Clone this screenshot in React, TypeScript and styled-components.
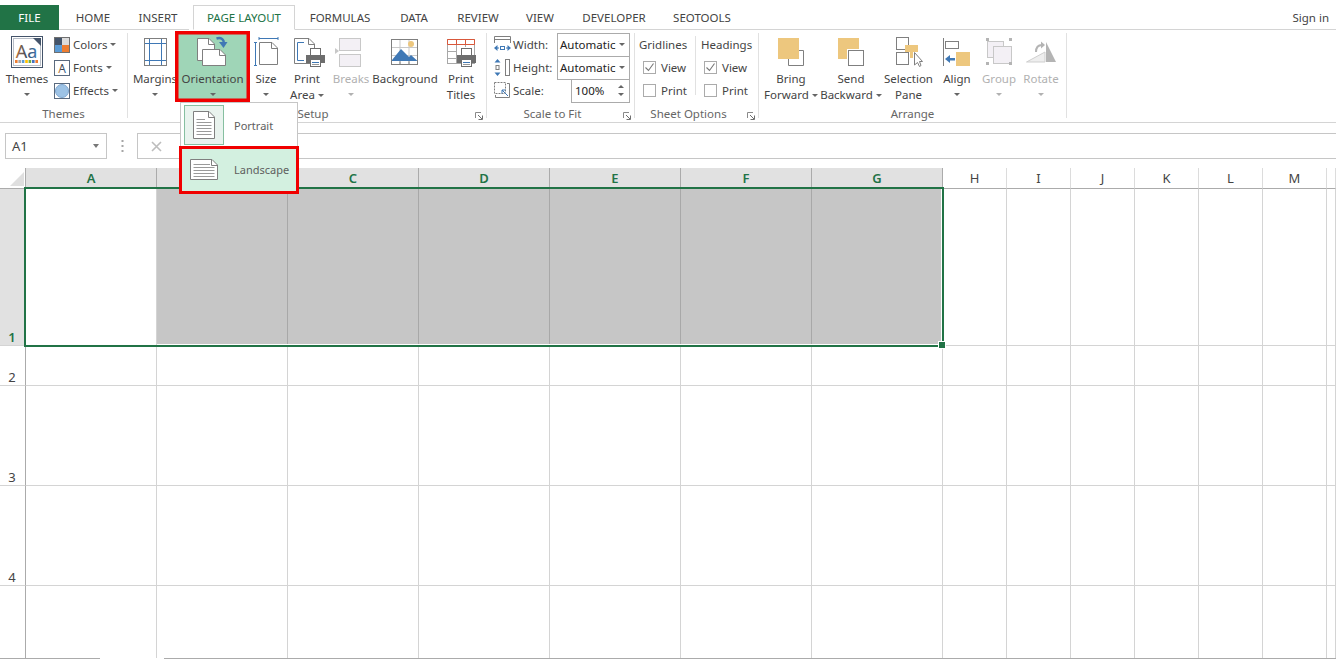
import React from "react";
import styled, { createGlobalStyle } from "styled-components";

const FONT = `"Noto Sans", "Open Sans", "Liberation Sans", sans-serif`;
const GREEN = "#217346";
const GRAY = "#7f7f7f";
const BLUE = "#3f78b5";
const ORANGE = "#edc77e";

const Global = createGlobalStyle`
  html, body { margin: 0; padding: 0; height: 660px; overflow: hidden; background: #fff; }
  body { font-family: ${FONT}; font-size: 11.5px; color: #444; }
  * { box-sizing: border-box; }
`;

const Page = styled.div`
  width: 1336px;
  height: 660px;
  overflow: hidden;
  display: flex;
  flex-direction: column;
`;

/* ---------- tab strip ---------- */
const TabBar = styled.nav`
  height: 30px;
  display: flex;
  align-items: flex-end;
  position: relative;
  flex: none;
  z-index: 1;
`;
const Tab = styled.div<{ $w: number; $file?: boolean; $active?: boolean }>`
  width: ${(p) => p.$w}px;
  height: 25px;
  display: flex;
  align-items: center;
  justify-content: center;
  font-size: 11.5px;
  color: ${(p) => (p.$file ? "#fff" : p.$active ? GREEN : "#444")};
  background: ${(p) => (p.$file ? GREEN : "#fff")};
  border: ${(p) => (p.$active ? "1px solid #d4d4d4" : "none")};
  border-bottom: ${(p) => (p.$active ? "1px solid #fff" : p.$file ? "none" : "1px solid #d4d4d4")};
  margin-left: ${(p) => (p.$active ? 4 : 0)}px;
`;
const TabFill = styled.div`
  flex: 1;
  height: 25px;
  display: flex;
  align-items: center;
  justify-content: flex-end;
  padding-right: 7px;
  border-bottom: 1px solid #d4d4d4;
  font-size: 11.5px;
`;

/* ---------- ribbon ---------- */
const Ribbon = styled.div`
  height: 93px;
  flex: none;
  display: flex;
  padding-top: 3px;
  border-bottom: 1px solid #d4d4d4;
  position: relative;
  z-index: 5;
`;
const Group = styled.section<{ $w: number }>`
  width: ${(p) => p.$w}px;
  height: 85px;
  border-right: 1px solid #e1e1e1;
  position: relative;
  flex: none;
`;
const GroupBody = styled.div<{ $pad?: number }>`
  height: 71px;
  margin-top: -2px;
  display: flex;
  padding-left: ${(p) => p.$pad ?? 0}px;
`;
const GroupLabel = styled.div<{ $shift?: number }>`
  margin-top: 5px;
  height: 14px;
  line-height: 14px;
  text-align: center;
  font-size: 11.5px;
  color: #666;
  padding-right: ${(p) => p.$shift ?? 0}px;
  white-space: nowrap;
`;
const Launcher = styled.svg`
  position: absolute;
  right: 3px;
  top: 79px;
`;
const LargeButton = styled.div<{ $w: number; $off?: boolean; $on?: boolean; $lap?: number }>`
  width: ${(p) => p.$w}px;
  margin-left: ${(p) => p.$lap ?? 0}px;
  height: 71px;
  flex: none;
  display: flex;
  flex-direction: column;
  align-items: center;
  position: relative;
  color: ${(p) => (p.$off ? "#b1b1b1" : "#444")};
  background: ${(p) => (p.$on ? "#9fd5b7" : "transparent")};
  box-shadow: ${(p) => (p.$on ? "inset 0 0 0 3.5px #f00000" : "none")};
`;
const Art = styled.svg`
  display: block;
  flex: none;
`;
const Line = styled.div`
  height: 16px;
  line-height: 16px;
  font-size: 11.5px;
  white-space: nowrap;
  display: flex;
  align-items: center;
  justify-content: center;
`;
const Caret = styled.span<{ $off?: boolean; $gap?: number }>`
  display: inline-block;
  width: 0;
  height: 0;
  margin-left: ${(p) => p.$gap ?? 0}px;
  border-left: 3px solid transparent;
  border-right: 3px solid transparent;
  border-top: 3px solid ${(p) => (p.$off ? "#b1b1b1" : "#666")};
`;

const StackColumn = styled.div<{ $w?: number; $pad?: number }>`
  width: ${(p) => (p.$w ? `${p.$w}px` : "auto")};
  padding-top: 2px;
  padding-left: ${(p) => p.$pad ?? 0}px;
  display: flex;
  flex-direction: column;
  flex: none;
`;
const StackRow = styled.div<{ $gap?: number; $in?: number }>`
  height: 23px;
  display: flex;
  align-items: center;
  gap: ${(p) => p.$gap ?? 3}px;
  padding-left: ${(p) => p.$in ?? 0}px;
  font-size: 11.5px;
  white-space: nowrap;
`;
const DropBox = styled.div<{ $w: number; $inset?: number }>`
  width: ${(p) => p.$w}px;
  height: 24px;
  align-self: flex-start;
  margin-left: auto;
  border: 1px solid #ababab;
  background: #fff;
  display: flex;
  align-items: center;
  padding: 0 4px 1px ${(p) => p.$inset ?? 2}px;
  color: #222;
  font-size: 11.5px;
  justify-content: space-between;
`;
const Spin = styled.div`
  display: flex;
  flex-direction: column;
  gap: 5px;
  padding-right: 1px;
`;
const SpinUp = styled(Caret)`
  border-top: none;
  border-bottom: 3px solid #666;
`;
const Check = styled.span`
  width: 13px;
  height: 13px;
  border: 1px solid #ababab;
  background: #fff;
  display: inline-flex;
  align-items: center;
  justify-content: center;
  flex: none;
`;
const Divider = styled.div`
  width: 1px;
  height: 59px;
  margin-top: 5px;
  background: #e1e1e1;
  flex: none;
`;

/* ---------- orientation menu ---------- */
const Menu = styled.div`
  position: absolute;
  left: 5px;
  top: 71px;
  width: 118px;
  height: 91px;
  background: #fff;
  border: 1px solid #c6c6c6;
  color: #5e5e5e;
  z-index: 3;
`;
const MenuRow = styled.div<{ $hot?: boolean }>`
  display: flex;
  align-items: center;
  font-size: 11px;
  height: ${(p) => (p.$hot ? 48 : 44)}px;
  width: ${(p) => (p.$hot ? 120 : 116)}px;
  margin-left: ${(p) => (p.$hot ? -2 : 0)}px;
  margin-top: ${(p) => (p.$hot ? -1 : 0)}px;
  padding-left: ${(p) => (p.$hot ? 8 : 3)}px;
  padding-bottom: ${(p) => (p.$hot ? 2 : 0)}px;
  background: ${(p) => (p.$hot ? "#d3f0e0" : "#fff")};
  border: ${(p) => (p.$hot ? "3px solid #f00000" : "none")};
  gap: ${(p) => (p.$hot ? 16 : 10)}px;
`;
const MenuIcon = styled.span<{ $boxed?: boolean }>`
  display: flex;
  align-items: center;
  justify-content: center;
  width: ${(p) => (p.$boxed ? 40 : 28)}px;
  height: ${(p) => (p.$boxed ? 40 : 24)}px;
  background: ${(p) => (p.$boxed ? "#e9f3ee" : "transparent")};
  border: ${(p) => (p.$boxed ? "1px solid #86bfa0" : "none")};
  flex: none;
`;

/* ---------- formula bar ---------- */
const FormulaBar = styled.div`
  height: 45px;
  flex: none;
  padding: 10px 0 9px 5px;
  display: flex;
`;
const NameBox = styled.div`
  width: 102px;
  height: 26px;
  border: 1px solid #c6c6c6;
  display: flex;
  align-items: center;
  justify-content: space-between;
  padding: 0 7px 0 6px;
  font-size: 13px;
  color: #444;
`;
const NameCaret = styled.span`
  width: 0;
  height: 0;
  border-left: 3.5px solid transparent;
  border-right: 3.5px solid transparent;
  border-top: 4px solid #777;
`;
const DotsSlot = styled.div`
  width: 30px;
  display: flex;
  align-items: center;
  justify-content: center;
`;
const FormulaBox = styled.div`
  flex: 1;
  height: 26px;
  border: 1px solid #c6c6c6;
  border-right: none;
  display: flex;
  align-items: center;
  padding-left: 13px;
`;

/* ---------- sheet ---------- */
const Sheet = styled.div`
  position: relative;
  display: grid;
  grid-template-columns: 26px repeat(7, 131px) repeat(6, 64px) 1fr;
  grid-template-rows: 21px 157px 40px 100px 100px 72px;
  flex: none;
`;
const Corner = styled.div`
  border-right: 1px solid #ababab;
  border-bottom: 1px solid #ababab;
  padding: 4px 1px 2px 10px;
`;
const CornerMark = styled.div`
  width: 14px;
  height: 14px;
  background: #dfdfdf;
  clip-path: polygon(100% 0, 100% 100%, 0 100%);
`;
const ColHead = styled.div<{ $sel?: boolean }>`
  display: flex;
  align-items: center;
  justify-content: center;
  font-size: 13px;
  font-weight: ${(p) => (p.$sel ? 600 : 400)};
  color: ${(p) => (p.$sel ? GREEN : "#444")};
  background: ${(p) => (p.$sel ? "#e1e1e1" : "#fff")};
  border-right: 1px solid ${(p) => (p.$sel ? "#ababab" : "#dcdcdc")};
  border-bottom: 1px solid #ababab;
`;
const RowHead = styled.div<{ $sel?: boolean; $last?: boolean }>`
  display: flex;
  align-items: flex-end;
  justify-content: center;
  padding: 0 1px 0 0;
  line-height: 16px;
  font-size: 13px;
  font-weight: ${(p) => (p.$sel ? 600 : 400)};
  color: ${(p) => (p.$sel ? GREEN : "#444")};
  background: ${(p) => (p.$sel ? "#e1e1e1" : "#fff")};
  border-right: 1px solid #ababab;
  border-bottom: ${(p) => (p.$last ? "none" : "1px solid #d4d4d4")};
`;
const Cell = styled.div<{ $sel?: boolean; $last?: boolean }>`
  background: ${(p) => (p.$sel ? "#c6c6c6" : "#fff")};
  border-right: 1px solid ${(p) => (p.$sel ? "#a8a8a8" : "#d4d4d4")};
  border-bottom: ${(p) => (p.$last ? "none" : "1px solid #d4d4d4")};
`;
const Selection = styled.div`
  position: absolute;
  left: 24px;
  top: 19px;
  width: 920px;
  height: 160px;
  border: 2px solid ${GREEN};
  &::before {
    content: "";
    position: absolute;
    left: 131px;
    right: 0;
    top: 0;
    bottom: 0;
    border-right: 1px solid #fff;
    border-bottom: 1px solid #fff;
  }
`;
const Handle = styled.div`
  position: absolute;
  right: -3px;
  bottom: -3px;
  width: 6px;
  height: 6px;
  background: ${GREEN};
  outline: 1px solid #fff;
`;
const SheetFoot = styled.div`
  height: 2px;
  flex: none;
  display: flex;
  gap: 64px;
`;
const FootLine = styled.div<{ $w?: number }>`
  ${(p) => (p.$w ? `width:${p.$w}px;` : "flex:1;")}
  height: 1px;
  background: #ababab;
`;

/* ---------- drawings ---------- */
type ArtProps = { x: number; w: number; children: React.ReactNode };
const PageArt = ({ x, w, children }: ArtProps) => (
  <Art width={w} height={40} viewBox={`${x} 31 ${w} 40`}>
    {children}
  </Art>
);

const Sheetlet = ({ x, y, w, h, f = 7, s = GRAY, fill = "#fff" }: { x: number; y: number; w: number; h: number; f?: number; s?: string; fill?: string }) => (
  <>
    <path d={`M${x + 0.5} ${y + 0.5}H${x + w - f}L${x + w - 0.5} ${y + f}V${y + h - 0.5}H${x + 0.5}Z`} fill={fill} stroke={s} />
    <path d={`M${x + w - f - 0.5} ${y + 0.5}V${y + f + 0.5}H${x + w - 0.5}`} fill="none" stroke={s} />
  </>
);

const Printer = ({ x, y }: { x: number; y: number }) => (
  <>
    <rect x={x + 4.5} y={y + 0.5} width={10} height={8} fill="#fff" stroke="#6d6d6d" />
    <path d={`M${x} ${y + 7}H${x + 19}V${y + 15}H${x}Z`} fill="#6d6d6d" />
    <rect x={x + 4.5} y={y + 11.5} width={10} height={7} fill="#fff" stroke="#6d6d6d" />
    <path d={`M${x + 6} ${y + 14.5}H${x + 13}`} stroke={BLUE} />
    <path d={`M${x + 6} ${y + 16.5}H${x + 13}`} stroke="#9a9a9a" />
  </>
);

const ThemesArt = () => (
  <PageArt x={3} w={48}>
    <defs>
      <linearGradient id="aa" x1="0" x2="1" y1="0" y2="0">
        <stop offset="0" stopColor="#b9703a" />
        <stop offset="0.5" stopColor="#3a4a63" />
        <stop offset="1" stopColor="#3f78b5" />
      </linearGradient>
    </defs>
    <rect x={11.5} y={36.5} width={31} height={31} fill="#fff" stroke="#44546a" />
    <rect x={13.5} y={38.5} width={27} height={27} fill="#fff" stroke="#b8bec7" />
    <path d="M33 38H41V46Z" fill="#44546a" />
    <text x={26.5} y={57.5} textAnchor="middle" fontFamily={FONT} fontSize={18} fill="url(#aa)">Aa</text>
    {["#ed7d31", "#a5a5a5", "#5b9bd5", "#ffc000", "#70ad47", "#4472c4", "#ed7d31"].map((c, i) => (
      <rect key={i} x={15 + i * 3.4} y={60} width={2.6} height={3} fill={c} />
    ))}
  </PageArt>
);
const SmallFrame = styled.svg`
  flex: none;
  display: block;
`;
const ColorsArt = () => (
  <SmallFrame width={16} height={16} viewBox="0 0 16 16">
    <rect width={8} height={8} fill="#44546a" />
    <rect x={8} width={8} height={8} fill="#dcdcdc" />
    <rect y={8} width={8} height={8} fill="#5b9bd5" />
    <rect x={8} y={8} width={8} height={8} fill="#ed7d31" />
    <rect x={0.5} y={0.5} width={15} height={15} fill="none" stroke="#6f6f6f" />
  </SmallFrame>
);
const FontsArt = () => (
  <SmallFrame width={16} height={16} viewBox="0 0 16 16">
    <defs>
      <linearGradient id="fa" x1="0" x2="1" y1="0" y2="0">
        <stop offset="0" stopColor="#e08a3c" />
        <stop offset="0.5" stopColor="#30384a" />
        <stop offset="1" stopColor="#3f78b5" />
      </linearGradient>
    </defs>
    <rect x={0.5} y={0.5} width={15} height={15} fill="#fff" stroke="#5a6a7f" />
    <text x={8} y={12.5} textAnchor="middle" fontFamily={FONT} fontSize={12} fill="url(#fa)">A</text>
  </SmallFrame>
);
const EffectsArt = () => (
  <SmallFrame width={16} height={16} viewBox="0 0 16 16">
    <rect x={0.5} y={0.5} width={15} height={15} fill="#fff" stroke="#5a6a7f" />
    <circle cx={8} cy={8} r={6.5} fill="#9dc3e6" stroke="#7ea6cf" />
  </SmallFrame>
);
const MarginsArt = () => (
  <PageArt x={131} w={48}>
    <rect x={144.5} y={38.5} width={22} height={27} fill="#fff" stroke={GRAY} />
    <path d="M149.5 39V65M161.5 39V65M145 43.5H166M145 60.5H166" stroke={BLUE} fill="none" />
  </PageArt>
);
const OrientationArt = () => (
  <PageArt x={175} w={75}>
    <Sheetlet x={197} y={38} w={18} h={23} f={6} />
    <Sheetlet x={202} y={49} w={24} h={17} f={6} />
    <path d="M216.5 38.5C221 37 224.5 39.5 223.5 43.5" fill="none" stroke={BLUE} strokeWidth={2.4} />
    <path d="M219 42L223.5 48L227.5 42Z" fill={BLUE} />
  </PageArt>
);
const SizeArt = () => (
  <PageArt x={250} w={32}>
    <path d="M259 38.5H278M255.5 42V65" stroke={BLUE} fill="none" />
    <path d="M259 37V40M278 37V40M254 42.5H257M254 65.5H257" stroke={BLUE} fill="none" />
    <Sheetlet x={259} y={42} w={19} h={23} f={6} />
  </PageArt>
);
const PrintAreaArt = () => (
  <PageArt x={284} w={46}>
    <Sheetlet x={294} y={38} w={21} h={26} f={6} />
    <path d="M304 42.5H297.5V60.5H304" fill="none" stroke={BLUE} />
    <Printer x={306} y={48} />
  </PageArt>
);
const BreaksArt = () => (
  <PageArt x={331} w={40}>
    <rect x={339.5} y={38.5} width={21} height={12} fill="#f3f0f5" stroke="#c8c8c8" />
    <rect x={339.5} y={54.5} width={21} height={12} fill="#f3f0f5" stroke="#c8c8c8" />
    <path d="M335 48V54L339 51Z" fill="#c8c8c8" />
  </PageArt>
);
const BackgroundArt = () => (
  <PageArt x={371} w={68}>
    <rect x={391.5} y={39.5} width={26} height={25} fill="#fff" stroke={GRAY} />
    <path d="M400 40V64M409 40V64M392 47.5H417M392 55.5H417" stroke="#c9c9c9" fill="none" />
    <circle cx={411} cy={44} r={3} fill={ORANGE} />
    <path d="M392 60L401 49L409 57L411 55L417 60.5V61H392Z" fill={BLUE} />
    <path d="M392 61.5H417" stroke="#fff" />
    <path d="M400 61V64M409 61V64" stroke={GRAY} />
  </PageArt>
);
const PrintTitlesArt = () => (
  <PageArt x={441} w={40}>
    <rect x={447.5} y={39.5} width={27} height={24} fill="#fff" stroke="#a8a8a8" />
    <path d="M448 44.5H474M448 51.5H456M448 58.5H456M456.5 40V64M465.5 40V47" stroke="#a8a8a8" fill="none" />
    <path d="M447.5 39.5H474.5V44.5H447.5ZM456.5 40V44M465.5 40V44" stroke="#d9583b" fill="none" />
    <Printer x={457} y={48} />
  </PageArt>
);
const WidthArt = () => (
  <SmallFrame width={17} height={17} viewBox="0 0 17 17">
    <path d="M0.5 7V0.5H16.5V7M0.5 3.5H16.5" fill="none" stroke={GRAY} />
    <path d="M0 12L3.5 9V15ZM17 12L13.5 9V15Z" fill={BLUE} />
    <path d="M3 12H5M12 12H14" stroke={BLUE} />
    <rect x={6.5} y={10.5} width={4} height={3} fill="none" stroke={BLUE} />
  </SmallFrame>
);
const HeightArt = () => (
  <SmallFrame width={17} height={17} viewBox="0 0 17 17">
    <path d="M3.5 0L6.5 3.5H0.5ZM3.5 17L6.5 13.5H0.5Z" fill={BLUE} />
    <rect x={2} y={6.5} width={3} height={4} fill="none" stroke={GRAY} />
    <rect x={11.5} y={0.5} width={4} height={16} fill="none" stroke={GRAY} />
  </SmallFrame>
);
const ScaleArt = () => (
  <SmallFrame width={17} height={17} viewBox="0 0 17 17">
    <path d="M13 1.5H15.5V15.5H1.5V13" fill="none" stroke={GRAY} />
    <rect x={0.5} y={0.5} width={11} height={11} fill="#fff" stroke={GRAY} strokeDasharray="2 1" />
    <path d="M8 8L14 14M8 8H11.5M8 8V11.5" fill="none" stroke={BLUE} />
  </SmallFrame>
);
const Tick = () => (
  <svg width={11} height={11} viewBox="0 0 11 11">
    <path d="M1.5 5.5L4.5 8.5L9.5 1.5" fill="none" stroke="#777" strokeWidth={1.1} />
  </svg>
);
const BringArt = () => (
  <PageArt x={761} w={60}>
    <path d="M799 50.5H803.5V65.5H788.5V59" fill="none" stroke={GRAY} strokeWidth={1} />
    <rect x={778} y={38} width={21} height={21} fill={ORANGE} />
  </PageArt>
);
const SendArt = () => (
  <PageArt x={821} w={60}>
    <rect x={838} y={38} width={21} height={21} fill={ORANGE} />
    <rect x={847} y={49} width={18} height={17.5} fill="#fff" />
    <rect x={848.5} y={50.5} width={15} height={15} fill="#fff" stroke={GRAY} />
  </PageArt>
);
const SelectionArt = () => (
  <PageArt x={881} w={55}>
    <rect x={896.5} y={37.5} width={12} height={12} fill="#fff" stroke={GRAY} />
    <rect x={896.5} y={52.5} width={12} height={12} fill="#fff" stroke={GRAY} />
    <path d="M905 45H918V52H913V58H910V52H905Z" fill={ORANGE} />
    <path d="M914.5 52.5V65L917.5 62.5L919.5 66.5L921 65.5L919.5 61.5H922.5Z" fill="#fff" stroke={GRAY} />
  </PageArt>
);
const AlignArt = () => (
  <PageArt x={936} w={42}>
    <path d="M943.5 38V66" stroke={GRAY} />
    <rect x={945.5} y={41.5} width={13} height={7} fill="#fff" stroke={GRAY} />
    <rect x={956} y={52} width={14} height={14} fill={ORANGE} />
    <path d="M945 59L950 55V58H955V60.5H950V63Z" fill={BLUE} />
  </PageArt>
);
const GroupArt = () => (
  <PageArt x={978} w={42}>
    <rect x={987.5} y={41.5} width={16} height={16} fill="#f3f0f5" stroke="#c8c8c8" />
    <rect x={993.5} y={46.5} width={18} height={17} fill="#f3f0f5" stroke="#c8c8c8" />
    {[[986, 38], [1009, 38], [986, 62], [1009, 62]].map(([x, y]) => (
      <rect key={x * y} x={x} y={y} width={3} height={3} fill="#b4b4b4" />
    ))}
  </PageArt>
);
const RotateArt = () => (
  <PageArt x={1020} w={42}>
    <path d="M1026.5 62H1045V52Z" fill="#eeeeee" stroke="#cfcfcf" />
    <path d="M1046 42L1056 62H1046Z" fill="#b4b4b4" />
    <path d="M1036 52C1036 47 1038 45 1042 45" fill="none" stroke="#b4b4b4" strokeWidth={2} />
    <path d="M1041 41.5L1045 45L1041 48.5Z" fill="#b4b4b4" />
  </PageArt>
);
const LauncherArt = () => (
  <Launcher width={8} height={8} viewBox="0 0 8 8">
    <path d="M0.5 6V0.5H6" fill="none" stroke="#8a8a8a" />
    <path d="M3 3L7 7M7.5 3.5V7.5H3.5" fill="none" stroke="#6f6f6f" />
  </Launcher>
);
const PortraitArt = () => (
  <svg width={23} height={29} viewBox="0 0 23 29">
    <Sheetlet x={0} y={0} w={22} h={28} f={6} />
    <path d="M3.5 8.5H12M3.5 11.5H18.5M3.5 14.5H18.5M3.5 17.5H18.5M3.5 20.5H18.5M3.5 23.5H18.5" stroke="#9a9a9a" />
  </svg>
);
const LandscapeArt = () => (
  <svg width={28} height={21} viewBox="0 0 28 21">
    <Sheetlet x={0} y={0} w={28} h={21} f={6} />
    <path d="M3.5 5.5H20M3.5 8.5H24.5M3.5 11.5H24.5M3.5 14.5H24.5M3.5 17.5H24.5" stroke="#9a9a9a" />
  </svg>
);
const Dots = () => (
  <svg width={3} height={12} viewBox="0 0 3 12">
    <path d="M0.5 0H2.5V2H0.5ZM0.5 5H2.5V7H0.5ZM0.5 10H2.5V12H0.5Z" fill="#a6a6a6" />
  </svg>
);
const CrossArt = () => (
  <svg width={11} height={11} viewBox="0 0 11 11">
    <path d="M1 1L10 10M10 1L1 10" stroke="#bdbdbd" strokeWidth={1.6} />
  </svg>
);

/* ---------- data ---------- */
const TABS: [string, number][] = [
  ["HOME", 68],
  ["INSERT", 62],
];
const TABS_AFTER: [string, number][] = [
  ["FORMULAS", 90],
  ["DATA", 58],
  ["REVIEW", 70],
  ["VIEW", 54],
  ["DEVELOPER", 94],
  ["SEOTOOLS", 82],
];
const COLS = ["A", "B", "C", "D", "E", "F", "G", "H", "I", "J", "K", "L", "M", ""];
const ROWS = [
  { n: "1", sel: true },
  { n: "2" },
  { n: "3" },
  { n: "4" },
  { n: "", last: true },
];

export default function App() {
  return (
    <Page>
      <Global />
      <TabBar>
        <Tab $w={59} $file>FILE</Tab>
        {TABS.map(([t, w]) => (
          <Tab key={t} $w={w}>{t}</Tab>
        ))}
        <Tab $w={102} $active>PAGE LAYOUT</Tab>
        {TABS_AFTER.map(([t, w]) => (
          <Tab key={t} $w={w}>{t}</Tab>
        ))}
        <TabFill>Sign in</TabFill>
      </TabBar>

      <Ribbon>
        <Group $w={128}>
          <GroupBody $pad={3}>
            <LargeButton $w={48}>
              <ThemesArt />
              <Line>Themes</Line>
              <Line><Caret /></Line>
            </LargeButton>
            <StackColumn $pad={3}>
              <StackRow><ColorsArt />Colors<Caret /></StackRow>
              <StackRow><FontsArt />Fonts<Caret /></StackRow>
              <StackRow><EffectsArt />Effects<Caret /></StackRow>
            </StackColumn>
          </GroupBody>
          <GroupLabel>Themes</GroupLabel>
        </Group>

        <Group $w={359}>
          <GroupBody $pad={3}>
            <LargeButton $w={48}>
              <MarginsArt />
              <Line>Margins</Line>
              <Line><Caret /></Line>
            </LargeButton>
            <LargeButton $w={75} $lap={-4} $on>
              <OrientationArt />
              <Line>Orientation</Line>
              <Line><Caret /></Line>
              <Menu>
                <MenuRow>
                  <MenuIcon $boxed><PortraitArt /></MenuIcon>
                  Portrait
                </MenuRow>
                <MenuRow $hot>
                  <MenuIcon><LandscapeArt /></MenuIcon>
                  Landscape
                </MenuRow>
              </Menu>
            </LargeButton>
            <LargeButton $w={32}>
              <SizeArt />
              <Line>Size</Line>
              <Line><Caret /></Line>
            </LargeButton>
            <LargeButton $w={46} $lap={2}>
              <PrintAreaArt />
              <Line>Print</Line>
              <Line>Area<Caret $gap={3} /></Line>
            </LargeButton>
            <LargeButton $w={40} $lap={1} $off>
              <BreaksArt />
              <Line>Breaks</Line>
              <Line><Caret $off /></Line>
            </LargeButton>
            <LargeButton $w={68}>
              <BackgroundArt />
              <Line>Background</Line>
            </LargeButton>
            <LargeButton $w={40} $lap={2}>
              <PrintTitlesArt />
              <Line>Print</Line>
              <Line>Titles</Line>
            </LargeButton>
          </GroupBody>
          <GroupLabel $shift={18}>Page Setup</GroupLabel>
          <LauncherArt />
        </Group>

        <Group $w={148}>
          <GroupBody $pad={7}>
            <StackColumn $w={136}>
              <StackRow $gap={2}><WidthArt />Width:<DropBox $w={73}>Automatic<Caret /></DropBox></StackRow>
              <StackRow $gap={2}><HeightArt />Height:<DropBox $w={73}>Automatic<Caret /></DropBox></StackRow>
              <StackRow $gap={2}>
                <ScaleArt />Scale:
                <DropBox $w={59} $inset={3}>
                  <span>100%</span>
                  <Spin><SpinUp /><Caret /></Spin>
                </DropBox>
              </StackRow>
            </StackColumn>
          </GroupBody>
          <GroupLabel $shift={16}>Scale to Fit</GroupLabel>
          <LauncherArt />
        </Group>

        <Group $w={124}>
          <GroupBody $pad={4}>
            <StackColumn $w={56}>
              <StackRow>Gridlines</StackRow>
              <StackRow $gap={5} $in={4}><Check><Tick /></Check>View</StackRow>
              <StackRow $gap={5} $in={4}><Check />Print</StackRow>
            </StackColumn>
            <Divider />
            <StackColumn $pad={5}>
              <StackRow>Headings</StackRow>
              <StackRow $gap={5} $in={3}><Check><Tick /></Check>View</StackRow>
              <StackRow $gap={5} $in={3}><Check />Print</StackRow>
            </StackColumn>
          </GroupBody>
          <GroupLabel $shift={16}>Sheet Options</GroupLabel>
          <LauncherArt />
        </Group>

        <Group $w={308}>
          <GroupBody $pad={2}>
            <LargeButton $w={60}>
              <BringArt />
              <Line>Bring</Line>
              <Line>Forward<Caret $gap={3} /></Line>
            </LargeButton>
            <LargeButton $w={60}>
              <SendArt />
              <Line>Send</Line>
              <Line>Backward<Caret $gap={3} /></Line>
            </LargeButton>
            <LargeButton $w={55}>
              <SelectionArt />
              <Line>Selection</Line>
              <Line>Pane</Line>
            </LargeButton>
            <LargeButton $w={42}>
              <AlignArt />
              <Line>Align</Line>
              <Line><Caret /></Line>
            </LargeButton>
            <LargeButton $w={42} $off>
              <GroupArt />
              <Line>Group</Line>
              <Line><Caret $off /></Line>
            </LargeButton>
            <LargeButton $w={42} $off>
              <RotateArt />
              <Line>Rotate</Line>
              <Line><Caret $off /></Line>
            </LargeButton>
          </GroupBody>
          <GroupLabel>Arrange</GroupLabel>
        </Group>
      </Ribbon>

      <FormulaBar>
        <NameBox>A1<NameCaret /></NameBox>
        <DotsSlot><Dots /></DotsSlot>
        <FormulaBox><CrossArt /></FormulaBox>
      </FormulaBar>

      <Sheet>
        <Corner><CornerMark /></Corner>
        {COLS.map((c, i) => (
          <ColHead key={i} $sel={i < 7}>{c}</ColHead>
        ))}
        {ROWS.map((r) => (
          <React.Fragment key={r.n || "x"}>
            <RowHead $sel={r.sel} $last={r.last}>{r.n}</RowHead>
            {COLS.map((_, i) => (
              <Cell key={i} $sel={r.sel && i > 0 && i < 7} $last={r.last} />
            ))}
          </React.Fragment>
        ))}
        <Selection><Handle /></Selection>
      </Sheet>
      <SheetFoot>
        <FootLine $w={100} />
        <FootLine />
      </SheetFoot>
    </Page>
  );
}
